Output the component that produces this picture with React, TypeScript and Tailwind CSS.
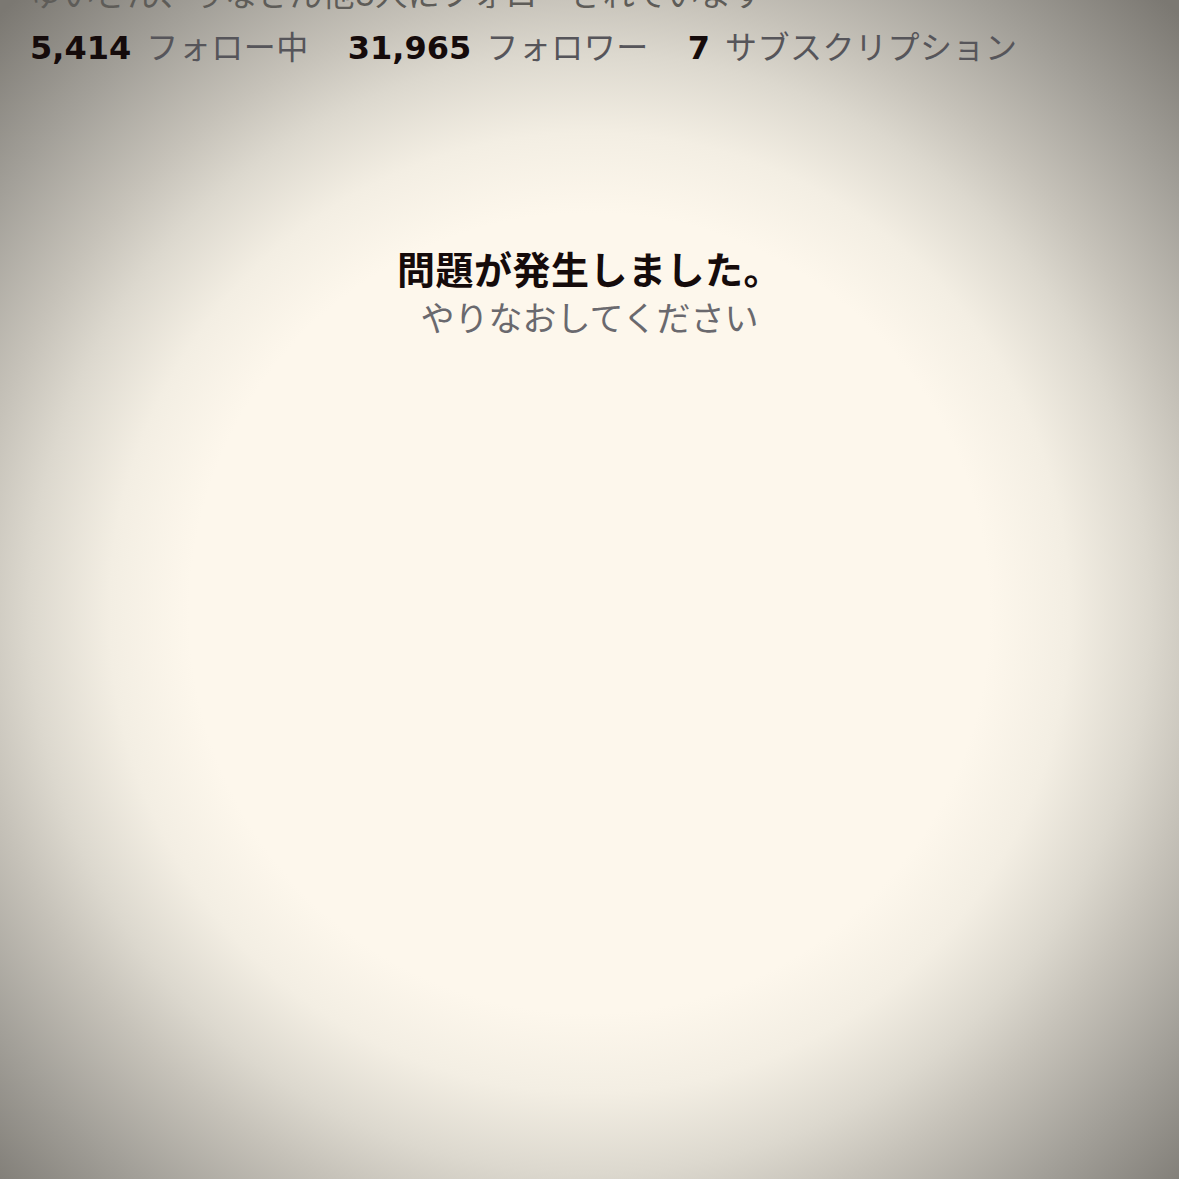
export default function App() {
  const stats = [
    { value: "5,414", label: "フォロー中" },
    { value: "31,965", label: "フォロワー" },
    { value: "7", label: "サブスクリプション" },
  ];

  return (
    <main className="h-[1179px] w-[1179px] overflow-hidden bg-[radial-gradient(circle_at_50%_52%,#fdf7ec_0px,#fdf7ec_400px,#f3eee3_480px,#dcd8ce_560px,#c6c2b9_620px,#a3a099_720px,#7b7872_840px)] font-['Inter','Noto_Sans_CJK_JP',sans-serif]">
      <div className="flex flex-col px-[30px]">
        <p className="-mt-[25px] h-[40px] whitespace-nowrap text-[32px] leading-[40px] tracking-[0.5px] text-[#5e5c58]">
          ゆいさん、りなさん他3人にフォローされています
        </p>
        <div className="mt-[11px] flex items-baseline gap-[39px] whitespace-nowrap leading-[44px]">
          {stats.map((s) => (
            <span key={s.label} className="flex items-baseline gap-[15px]">
              <span className="font-['DejaVu_Sans',sans-serif] text-[32px] font-bold text-[#150b0b]">
                {s.value}
              </span>
              <span className="text-[32px] tracking-[0.5px] text-[#56555a]">
                {s.label}
              </span>
            </span>
          ))}
        </div>
      </div>

      <section className="mt-[177px] flex flex-col items-center">
        <h1 className="text-[38px] font-bold leading-[46px] tracking-[0.5px] text-[#150b0b]">
          問題が発生しました。
        </h1>
        <p className="mt-[4px] text-[34px] leading-[44px] text-[#6a696e]">
          やりなおしてください
        </p>
      </section>
    </main>
  );
}
